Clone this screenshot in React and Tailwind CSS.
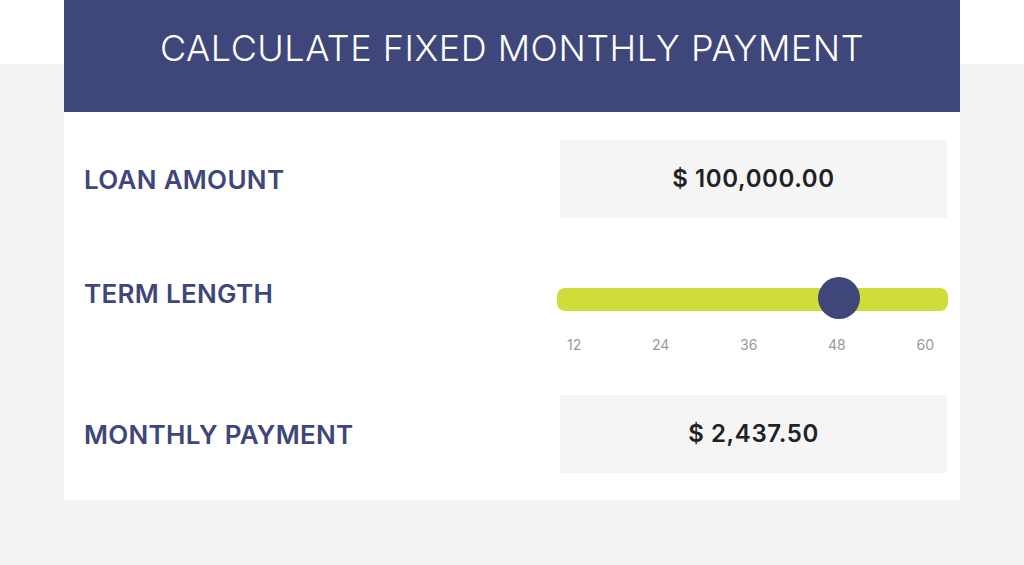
import React from 'react';

const ticks = [12, 24, 36, 48, 60];

const ValueBox = ({ children }) => (
  <div className="w-[387px] h-[78px] bg-[#f5f5f5] flex items-center justify-center text-[24px] font-semibold text-[#222222] tracking-[0.6px]">
    {children}
  </div>
);

export default function App() {
  return (
    <div
      className="min-h-screen bg-[linear-gradient(to_bottom,#ffffff_64px,#f3f3f6_64px)] pb-[65px]"
      style={{ fontFamily: 'Inter, "Open Sans", sans-serif' }}
    >
      <div className="ml-[64px] w-[896px] bg-white">
        {/* Header */}
        <div className="h-[112px] bg-[#3f4679] flex items-center justify-center pb-[16px]">
          <h1 className="text-white text-[36px] font-light tracking-[0.5px]">
            CALCULATE FIXED MONTHLY PAYMENT
          </h1>
        </div>

        {/* Body */}
        <div className="pl-[20px] pr-[13px] pt-[28px] pb-[27px]">
          {/* Loan amount */}
          <div className="flex items-center justify-between">
            <span className="text-[26px] font-semibold tracking-[0.3px] text-[#3f4679]">LOAN AMOUNT</span>
            <ValueBox>$ 100,000.00</ValueBox>
          </div>

          {/* Term length */}
          <div className="flex justify-between mt-[59px]">
            <span className="text-[26px] leading-[30px] font-semibold tracking-[0.3px] text-[#3f4679] mt-[2px]">TERM LENGTH</span>
            <div className="w-[391px] -mr-[1px]">
              <div className="relative h-[42px] flex items-center">
                <div className="w-full h-[23px] rounded-[8px] bg-[#cfdd3a] mt-[2px]" />
                <div className="absolute top-0 left-[261px] w-[42px] h-[42px] rounded-full bg-[#3f4679]" />
              </div>
              <div className="flex justify-between pl-[10px] pr-[14px] mt-[16px] text-[14px] leading-[20px] text-[#9a9a9a]">
                {ticks.map((t) => (
                  <span key={t}>{t}</span>
                ))}
              </div>
            </div>
          </div>

          {/* Monthly payment */}
          <div className="flex items-center justify-between mt-[40px]">
            <span className="text-[26px] font-semibold tracking-[0.3px] text-[#3f4679]">MONTHLY PAYMENT</span>
            <ValueBox>$ 2,437.50</ValueBox>
          </div>
        </div>
      </div>
    </div>
  );
}
